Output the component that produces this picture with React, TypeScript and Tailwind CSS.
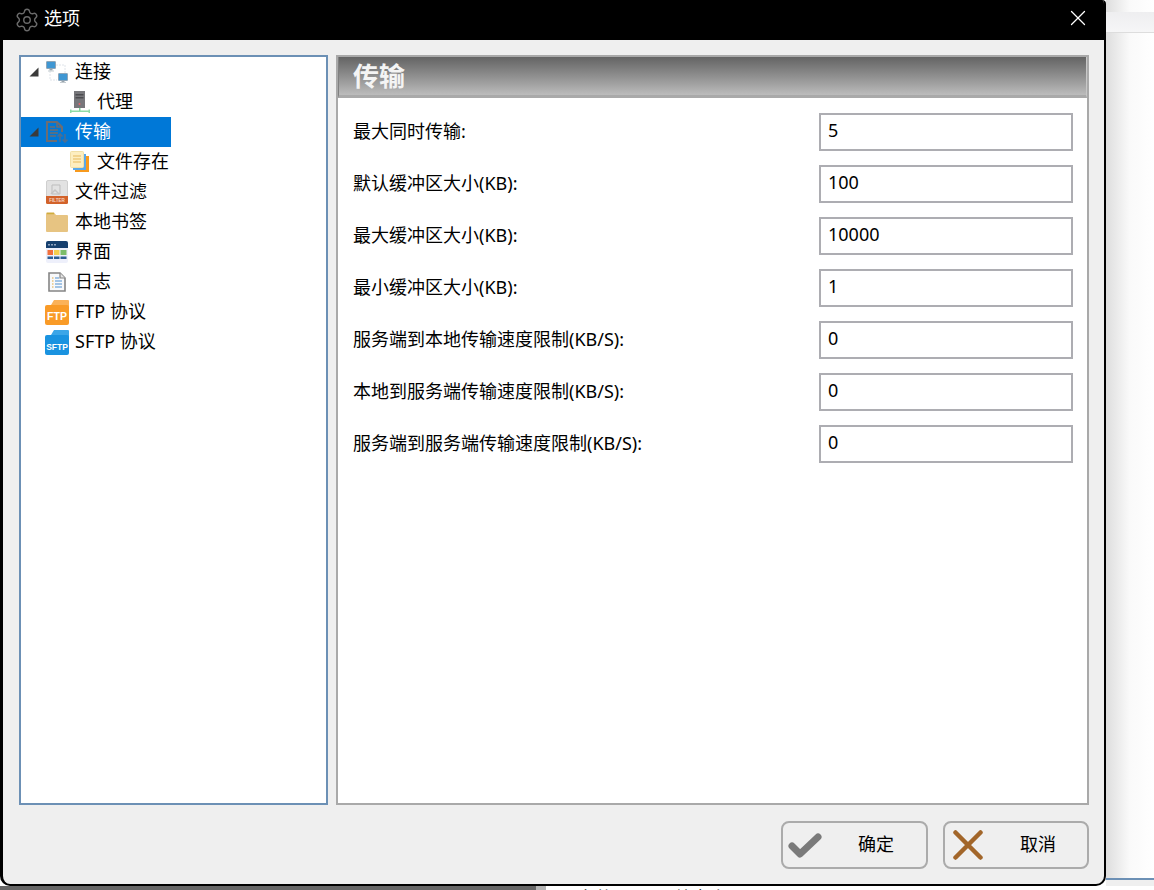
import React from 'react';
import { Settings, X } from 'lucide-react';

const FONT = "font-['Noto_Sans','Noto_Sans_CJK_SC',sans-serif]";

function Arrow() {
  return (
    <svg width="10" height="10" viewBox="0 0 10 10">
      <path d="M9.5 0.5V9.5H0.5Z" fill="#3a3a3a" />
    </svg>
  );
}

function ConnectIcon() {
  return (
    <svg width="24" height="24" viewBox="0 0 22 22">
      <path d="M10 4H19V12M4 10V19H11" fill="none" stroke="#dfe4ea" strokeWidth="1" strokeDasharray="2 1" />
      <rect x="0.5" y="0.5" width="9" height="7" rx="0.5" fill="#3f97d3" stroke="#8fa6b8" />
      <rect x="3.5" y="8" width="3" height="1.5" fill="#9aa5ad" />
      <rect x="2" y="9.5" width="6" height="1" fill="#c4cbd0" />
      <rect x="12.5" y="12.5" width="9" height="7" rx="0.5" fill="#3f97d3" stroke="#8fa6b8" />
      <rect x="15.5" y="20" width="3" height="1" fill="#9aa5ad" />
      <rect x="14" y="21" width="6" height="1" fill="#c4cbd0" />
    </svg>
  );
}

function ServerIcon() {
  return (
    <svg width="20" height="22" viewBox="0 0 20 22">
      <rect x="4" y="0" width="11" height="17" fill="#77777b" />
      <rect x="5.5" y="3" width="8" height="1.5" fill="#4c4c50" />
      <rect x="5.5" y="6" width="8" height="1.5" fill="#4c4c50" />
      <circle cx="9.5" cy="13" r="1" fill="#e8646e" />
      <rect x="9" y="17" width="1.5" height="3" fill="#79d394" />
      <rect x="0" y="19.5" width="20" height="1.5" fill="#8fdca6" />
      <rect x="0" y="18.5" width="1.5" height="3.5" fill="#8fdca6" />
      <rect x="18.5" y="18.5" width="1.5" height="3.5" fill="#8fdca6" />
    </svg>
  );
}

function TransferIcon() {
  return (
    <svg width="22" height="22" viewBox="0 0 22 22">
      <path d="M1 1H11L16 6V11M11 20H1Z" fill="none" stroke="#6d6d72" strokeWidth="2" />
      <path d="M1 0V21" stroke="#6d6d72" strokeWidth="2" />
      <path d="M11 1V6H16" fill="none" stroke="#6d6d72" strokeWidth="1.5" />
      <path d="M4 6H9M4 9H12M4 12H12M4 15H10" stroke="#6d6d72" strokeWidth="1.3" />
      <path d="M14 21V13M11.5 15.5L14 13L16.5 15.5" fill="none" stroke="#4c6f93" strokeWidth="1.6" />
      <path d="M19 13V21M16.5 18.5L19 21L21.5 18.5" fill="none" stroke="#4c6f93" strokeWidth="1.6" />
    </svg>
  );
}

function StoreIcon() {
  return (
    <svg width="20" height="22" viewBox="0 0 20 22">
      <rect x="5" y="5" width="14" height="16" fill="#f79a1e" />
      <rect x="3" y="3" width="13" height="16" fill="#5aa9ea" />
      <rect x="0.5" y="0.5" width="13" height="16" rx="1" fill="#fdeec0" stroke="#f1dfa6" />
      <path d="M3 5H11M3 8H11M3 11H11" stroke="#e6b95c" strokeWidth="1" />
    </svg>
  );
}

function FilterIcon() {
  return (
    <svg width="22" height="24" viewBox="0 0 22 24">
      <rect x="0.5" y="0.5" width="21" height="23" rx="1.5" fill="#e2e2e2" stroke="#cfcfcf" />
      <path d="M6 5H14V14H6Z" fill="none" stroke="#bdbdbd" />
      <path d="M5 14L9 10L13 14" fill="none" stroke="#c4c4c4" strokeWidth="1.5" />
      <path d="M0 16H22V22.5A1.5 1.5 0 0 1 20.5 24H1.5A1.5 1.5 0 0 1 0 22.5Z" fill="#d2622a" />
      <text x="11" y="22" textAnchor="middle" fontSize="4.5" fontWeight="700" fill="#f6d9c6" fontFamily="'Liberation Sans',sans-serif">FILTER</text>
    </svg>
  );
}

function FolderIcon() {
  return (
    <svg width="22" height="20" viewBox="0 0 22 20">
      <path d="M0 1.5A1 1 0 0 1 1 0.5H8L10 3H21A1 1 0 0 1 22 4V19A1 1 0 0 1 21 20H1A1 1 0 0 1 0 19Z" fill="#e7c482" />
      <path d="M1 1.5H8" stroke="#cfae3d" strokeWidth="1.5" />
    </svg>
  );
}

function UiIcon() {
  return (
    <svg width="22" height="22" viewBox="0 0 22 22">
      <rect x="0" y="0" width="22" height="22" rx="2" fill="#eef0fb" />
      <path d="M0 7V2A2 2 0 0 1 2 0H20A2 2 0 0 1 22 2V7Z" fill="#16406f" />
      <rect x="2" y="3" width="2" height="1.5" fill="#8fa4c0" />
      <rect x="5" y="3" width="2" height="1.5" fill="#8fa4c0" />
      <rect x="8" y="3" width="2" height="1.5" fill="#8fa4c0" />
      <rect x="1.5" y="9" width="5.5" height="5" fill="#f2703c" />
      <rect x="8" y="9" width="5.5" height="5" fill="#f6cf4f" />
      <rect x="14.5" y="9" width="6" height="5" fill="#7cbd6a" />
      <rect x="1.5" y="15.5" width="5.5" height="2.5" fill="#2f5f94" />
      <rect x="8" y="15.5" width="5.5" height="2.5" fill="#2f5f94" />
      <rect x="14.5" y="15.5" width="6" height="2.5" fill="#2f5f94" />
    </svg>
  );
}

function LogIcon() {
  return (
    <svg width="18" height="20" viewBox="0 0 18 20">
      <path d="M1 1H12L17 6V19H1Z" fill="#f8f9fb" stroke="#858585" strokeWidth="1.6" />
      <path d="M12 1V6H17" fill="#e4e4e4" stroke="#858585" strokeWidth="1.2" />
      <path d="M7 6H11M7 9H14M7 12H14M7 15H14" stroke="#4f8fcf" strokeWidth="1.2" />
      <path d="M4 6H5.5M4 9H5.5M4 12H5.5M4 15H5.5" stroke="#e2a93f" strokeWidth="1.2" />
    </svg>
  );
}

function ProtoIcon({ label, color, light, size }: { label: string; color: string; light: string; size: number }) {
  return (
    <svg width="24" height="25" viewBox="0 0 24 25" className="shrink-0">
      <path d="M6 5L9 0H23A1 1 0 0 1 24 1V7H6Z" fill={light} />
      <rect x="0" y="5" width="24" height="20" rx="2" fill={color} />
      <text x="12" y="19.5" textAnchor="middle" fontSize={size} fontWeight="700" fill="#ffffff" fontFamily="'Liberation Sans',sans-serif">{label}</text>
    </svg>
  );
}

const settings: [string, string][] = [
  ['最大同时传输:', '5'],
  ['默认缓冲区大小(KB):', '100'],
  ['最大缓冲区大小(KB):', '10000'],
  ['最小缓冲区大小(KB):', '1'],
  ['服务端到本地传输速度限制(KB/S):', '0'],
  ['本地到服务端传输速度限制(KB/S):', '0'],
  ['服务端到服务端传输速度限制(KB/S):', '0'],
];

function TreeRow({ icon, label, child, arrow, selected }: { icon: React.ReactNode; label: string; child?: boolean; arrow?: boolean; selected?: boolean }) {
  return (
    <div className={`flex h-[30px] w-[150px] items-center whitespace-nowrap ${selected ? 'bg-[#0078d7] text-white' : 'text-black'} ${child ? 'pl-[49px]' : 'pl-[8px]'}`}>
      {!child && <span className="flex w-[17px] shrink-0 items-center">{arrow && <Arrow />}</span>}
      <span className={`flex shrink-0 items-center justify-center ${child ? 'w-[20px]' : 'w-[22px]'}`}>{icon}</span>
      <span className="ml-[7px] pb-[2px]">{label}</span>
    </div>
  );
}

export default function App() {
  return (
    <div className={`flex h-[890px] w-[1154px] flex-col overflow-hidden bg-white text-[18px] leading-[24px] ${FONT}`}>
      <div className="flex h-[886px] shrink-0">
        {/* Dialog */}
        <div className="flex h-[886px] w-[1106px] shrink-0 flex-col overflow-hidden rounded-tr-[4px] rounded-b-[10px] border-r-[2px] border-b-[2px] border-l-[3px] border-black bg-[#efefef]">
          <div className="flex h-[40px] shrink-0 items-center bg-black pr-[13px] pl-[11px] text-white">
            <Settings size={26} strokeWidth={1.3} className="text-[#6a6a6a]" />
            <span className="mb-[4px] ml-[4px]">选项</span>
            <X size={26} strokeWidth={1.2} className="mb-[4px] ml-auto text-white" />
          </div>

          <div className="flex h-[765px] shrink-0 gap-[8px] pt-[15px] pl-[16px]">
            {/* Tree */}
            <div className="w-[309px] shrink-0 border-[2px] border-[#6c90b5] bg-white">
              <TreeRow arrow icon={<ConnectIcon />} label="连接" />
              <TreeRow child icon={<ServerIcon />} label="代理" />
              <TreeRow arrow selected icon={<TransferIcon />} label="传输" />
              <TreeRow child icon={<StoreIcon />} label="文件存在" />
              <TreeRow icon={<FilterIcon />} label="文件过滤" />
              <TreeRow icon={<FolderIcon />} label="本地书签" />
              <TreeRow icon={<UiIcon />} label="界面" />
              <TreeRow icon={<LogIcon />} label="日志" />
              <TreeRow icon={<ProtoIcon label="FTP" color="#f99b27" light="#fbb258" size={10.5} />} label="FTP 协议" />
              <TreeRow icon={<ProtoIcon label="SFTP" color="#1a93e0" light="#3ba6e8" size={8.5} />} label="SFTP 协议" />
            </div>

            {/* Settings page */}
            <div className="flex w-[753px] shrink-0 flex-col border-[2px] border-[#a9a9a9] bg-white">
              <div className="flex h-[41px] shrink-0 items-center border-r-[1px] border-b-[3px] border-l-[1px] border-r-[#c8c8c8] border-b-[#a9a9a9] border-l-[#808080] bg-gradient-to-b from-[#646464] to-[#bcbcbc] pl-[14px] text-[26px] font-bold text-[#f4f4f4]">
                传输
              </div>
              <div className="flex flex-col gap-[14px] pt-[15px] pr-[14px] pl-[15px]">
                {settings.map(([label, value]) => (
                  <div key={label} className="flex h-[38px] items-center justify-between text-black">
                    <span className="pb-[2px] whitespace-nowrap">{label}</span>
                    <div className="flex h-[38px] w-[254px] items-center border-[2px] border-[#adadb2] bg-white pb-[4px] pl-[7px]">{value}</div>
                  </div>
                ))}
              </div>
            </div>
          </div>

          <div className="flex flex-1 justify-end gap-[15px] pt-[16px] pr-[15px]">
            <button className="flex h-[48px] w-[147px] items-center rounded-[8px] border-[2px] border-[#ababab] pl-[5px] text-black">
              <svg width="34" height="28" viewBox="0 0 34 28" className="shrink-0">
                <path d="M4 15L12 23L30 6" fill="none" stroke="#7a7a7a" strokeWidth="7" strokeLinecap="round" strokeLinejoin="round" />
              </svg>
              <span className="ml-[36px] pb-[2px]">确定</span>
            </button>
            <button className="flex h-[48px] w-[146px] items-center rounded-[8px] border-[2px] border-[#ababab] pl-[8px] text-black">
              <svg width="30" height="30" viewBox="0 0 30 30" className="shrink-0">
                <path d="M2.5 2.5L27.5 27.5M27.5 2.5L2.5 27.5" fill="none" stroke="#a2662a" strokeWidth="4.5" strokeLinecap="round" />
              </svg>
              <span className="ml-[37px] pb-[2px]">取消</span>
            </button>
          </div>
        </div>

        {/* Window behind the dialog */}
        <div className="flex flex-1 flex-col bg-gradient-to-r from-[#dedede] via-[#fafafa] via-50% to-white">
          <div className="mt-[12px] h-[21px] border-b-[1px] border-[#dddddd] bg-gradient-to-b from-[#eeeef0] to-[#f6f6f7]" />
          <div className="mt-auto h-[2px] bg-[#6c90b5]" />
          <div className="h-[6px] bg-[#efefef]" />
        </div>
      </div>

      {/* Status bar of the window behind, cut off by the edge */}
      <div className="flex h-[4px] shrink-0 overflow-hidden">
        <div className="w-[536px] shrink-0 bg-[#666666]" />
        <div className="w-[10px] shrink-0 bg-[#b5b5b5]" />
        <div className="flex-1 pl-[16px] text-[18px] leading-[24px] whitespace-nowrap text-black">0 文件 0 目录 总大小: 0 B</div>
      </div>
    </div>
  );
}
